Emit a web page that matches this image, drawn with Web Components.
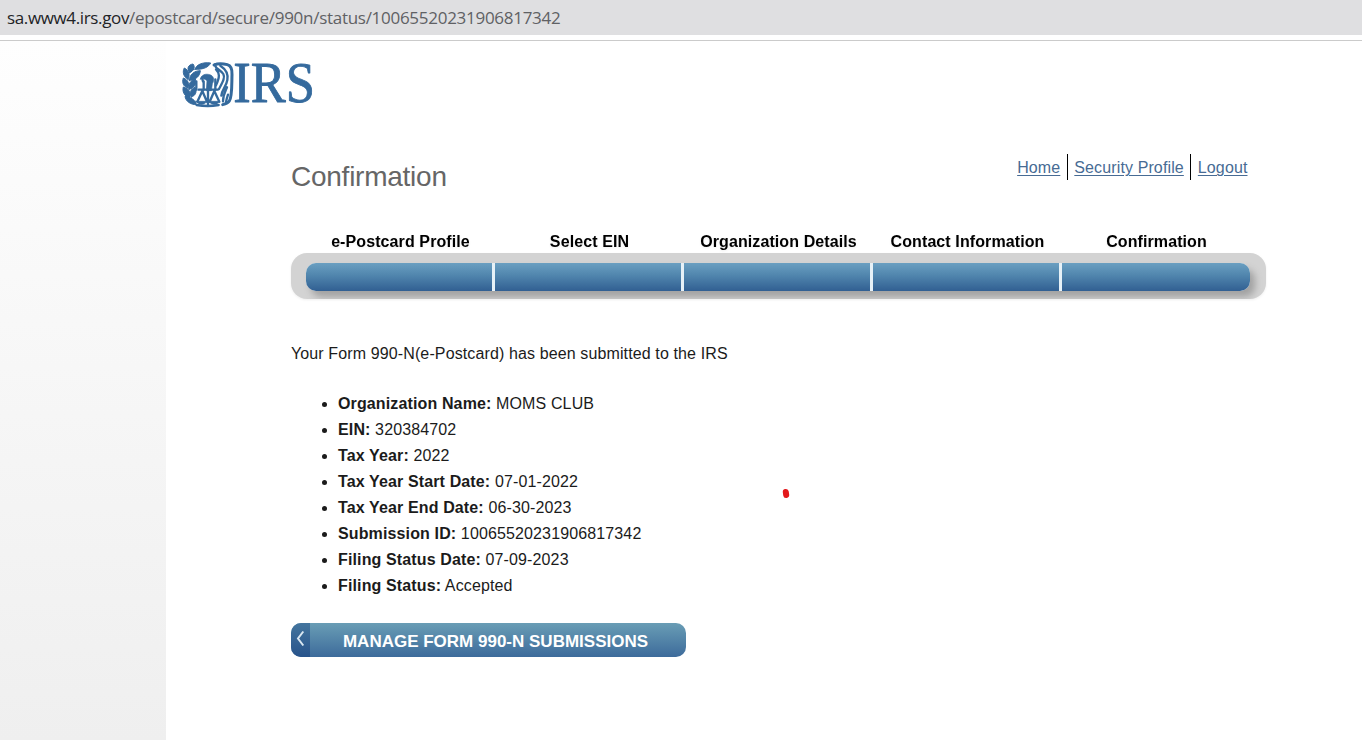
<!DOCTYPE html>
<html lang="en">
<head>
<meta charset="utf-8">
<title>Confirmation</title>
<style>
body{margin:0;background:#fff;font-family:"Liberation Sans",Arial,sans-serif;font-size:16px;color:#1b1b1b;overflow:hidden}
</style>
</head>
<body>
<epc-page></epc-page>
<script>
const define = (name, html) => customElements.define(name, class extends HTMLElement {
  constructor() {
    super();
    const t = document.createElement('template');
    t.innerHTML = html;
    this.attachShadow({ mode: 'open' }).append(t.content.cloneNode(true));
  }
});

define('address-bar', `
<style>
:host{display:block;height:35px;background:#dfdfe1;border-bottom:5px solid #fff;box-shadow:0 1px #cbcbcb;font:17px/35px "Open Sans","Noto Sans",sans-serif;color:#606164;padding-left:7px;white-space:nowrap}
.host{color:#222326;letter-spacing:-.36px}
.path{letter-spacing:-.28px}
</style><span class="host"><slot name="host"></slot></span><span class="path"><slot></slot></span>`);

define('irs-logo', `
<style>:host{display:block;width:160px;height:70px}svg{display:block}</style>
<svg width="160" height="70" viewBox="0 0 480 210" fill="none" stroke="#356a9d" stroke-linecap="round" stroke-linejoin="round">
<g fill="#356a9d" stroke-width="3">
<path d="M75 58C79 43 98 36 122 39C116 51 101 59 75 58Z"/>
<path d="M59 68C49 57 54 44 69 42C77 52 71 63 59 68Z"/>
<path d="M54 88C39 80 37 64 43 54C57 61 61 76 54 88Z"/>
<path d="M58 91C58 74 73 62 91 62C90 78 78 90 58 91Z"/>
<path d="M54 114C40 111 35 97 40 84C54 89 59 101 54 114Z"/>
<path d="M57 118C54 102 62 91 76 86C80 103 73 114 57 118Z"/>
<path d="M59 143C43 140 36 124 40 111C57 116 65 129 59 143Z"/>
<path d="M64 141C57 129 62 117 75 112C82 125 77 137 64 141Z"/>
<path d="M79 164C60 164 47 153 45 139C62 141 77 150 79 164Z"/>
</g>
<path fill="#356a9d" stroke-width="2" d="M91 87C94 75 106 69 122 75C133 80 133 93 127 101L124 122H109L111 92C104 86 98 85 91 87Z"/>
<path stroke-width="7" d="M96 83L99 94M101 94V120M86 119H143M114 121V164M97 123L82 155M97 123L111 155M133 123L119 155M133 123L148 155"/>
<path fill="#356a9d" stroke-width="2" d="M77 154H112Q95 173 77 154ZM115 154H150Q133 173 115 154Z"/>
<path stroke-width="7" d="M79 94V119M80 165Q113 171 146 165M136 88V119"/>
<path stroke-width="9" d="M132 45C143 40 157 40 172 44C183 47 187 56 186 74C185 101 187 139 178 153C174 160 166 162 158 164"/>
<path stroke-width="7" d="M134 43C136 57 153 60 160 72C166 83 158 96 147 117M138 58C149 69 150 80 138 106M151 47C168 58 175 74 172 90C169 109 156 118 154 137M171 112C166 124 159 135 159 154M174 134Q170 146 168 156"/>
<text x="190" y="157" fill="#356a9d" stroke-width="2.5" font-family="Liberation Serif" font-size="168" textLength="245" lengthAdjust="spacingAndGlyphs">IRS</text>
</svg>`);

define('account-nav', `
<style>
:host{display:flex;height:26px;line-height:28px;color:#476b94;letter-spacing:.12px}
::slotted(a){color:inherit;text-decoration:underline;text-underline-offset:2px;text-decoration-thickness:1px;padding:0 6px;border-left:1px solid #000}
::slotted(a:first-child){border-left:0;padding-left:0;padding-right:7px}
::slotted(a:last-child){padding-left:7px;padding-right:0}
</style><slot></slot>`);

define('step-progress', `
<style>
:host{display:block;width:975px}
.labels{display:grid;grid-template-columns:repeat(5,189px);padding-left:15px;height:24px;line-height:26px;font-weight:bold;color:#000;text-align:center;letter-spacing:.1px}
.track{box-sizing:border-box;height:46px;border-radius:16px;background:#d3d3d3;padding:10px 15px;overflow:hidden}
.bar{height:28px;width:944px;border-radius:10px;display:grid;grid-template-columns:repeat(4,186px) 1fr;gap:3px;background:#e6f1f7;overflow:hidden}
.shade{border-radius:10px;width:944px;box-shadow:5px 6px 7px #a2a2a2}
.bar i{background:linear-gradient(#6a9fc1,#5085ad 45%,#315f92)}
:host{filter:drop-shadow(0 1px 1px #0001)}
</style>
<div class="labels"><slot></slot></div>
<div class="track"><div class="shade"><div class="bar"><i></i><i></i><i></i><i></i><i></i></div></div></div>`);

define('filing-detail', `
<style>:host{display:list-item;line-height:26px;height:26px}b{font-weight:bold}</style><b><slot name="label"></slot></b> <slot></slot>`);

define('back-button', `
<style>
:host{display:block;width:395px;height:34px}
button{display:flex;width:100%;height:100%;border:0;padding:0;border-radius:10px;overflow:hidden;background:linear-gradient(#699db5,#3d6b9b);color:#fff;font:bold 17px/38px "Liberation Sans",Arial,sans-serif}
.arrow{width:19px;height:34px;background:linear-gradient(#44759e,#28538b)}
.arrow svg{display:block}
.text{flex:1;text-align:center;padding-right:5px;white-space:nowrap}
</style>
<button><span class="arrow"><svg width="19" height="34" viewBox="0 0 19 34"><path d="M12.3 8.5 7 15.5l5.3 7" fill="none" stroke="#d9e6f1" stroke-width="2"/></svg></span><span class="text"><slot></slot></span></button>`);

define('epc-page', `
<style>
:host{display:flex;flex-direction:column;height:740px;position:relative}
.body{display:flex;flex:1;margin-top:1px}
aside{width:166px;background:linear-gradient(#fefefe,#efefef)}
main{flex:1;padding:9px 0 0 4px}
.content{margin-left:121px;width:975px}
.top{display:flex;justify-content:space-between;margin-top:34px;padding-right:18.5px}
h1{font-weight:normal;font-size:28px;line-height:32px;color:#666;margin:7px 0 0;letter-spacing:-.25px}
step-progress{margin-top:36px}
p{margin:43px 0 0;line-height:24px;letter-spacing:.12px}
ul{margin:25px 0 0;padding:0 0 0 47px;letter-spacing:.13px}
back-button{margin-top:24px}
.mark{position:absolute;left:783px;top:489px;width:6px;height:9px;border-radius:3px;background:#e3191c;transform:rotate(-8deg)}
</style>
<address-bar><span slot="host">sa.www4.irs.gov</span>/epostcard/secure/990n/status/10065520231906817342</address-bar>
<div class="body"><aside></aside><main>
<irs-logo></irs-logo>
<div class="content">
<div class="top"><h1>Confirmation</h1><account-nav><a href="#">Home</a><a href="#">Security Profile</a><a href="#">Logout</a></account-nav></div>
<step-progress><span>e-Postcard Profile</span><span>Select EIN</span><span>Organization Details</span><span>Contact Information</span><span>Confirmation</span></step-progress>
<p>Your Form 990-N(e-Postcard) has been submitted to the IRS</p>
<ul>
<filing-detail><span slot="label">Organization Name:</span>MOMS CLUB</filing-detail>
<filing-detail><span slot="label">EIN:</span>320384702</filing-detail>
<filing-detail><span slot="label">Tax Year:</span>2022</filing-detail>
<filing-detail><span slot="label">Tax Year Start Date:</span>07-01-2022</filing-detail>
<filing-detail><span slot="label">Tax Year End Date:</span>06-30-2023</filing-detail>
<filing-detail><span slot="label">Submission ID:</span>10065520231906817342</filing-detail>
<filing-detail><span slot="label">Filing Status Date:</span>07-09-2023</filing-detail>
<filing-detail><span slot="label">Filing Status:</span>Accepted</filing-detail>
</ul>
<back-button>MANAGE FORM 990-N SUBMISSIONS</back-button>
</div>
</main></div>
<div class="mark"></div>`);
</script>
</body>
</html>
